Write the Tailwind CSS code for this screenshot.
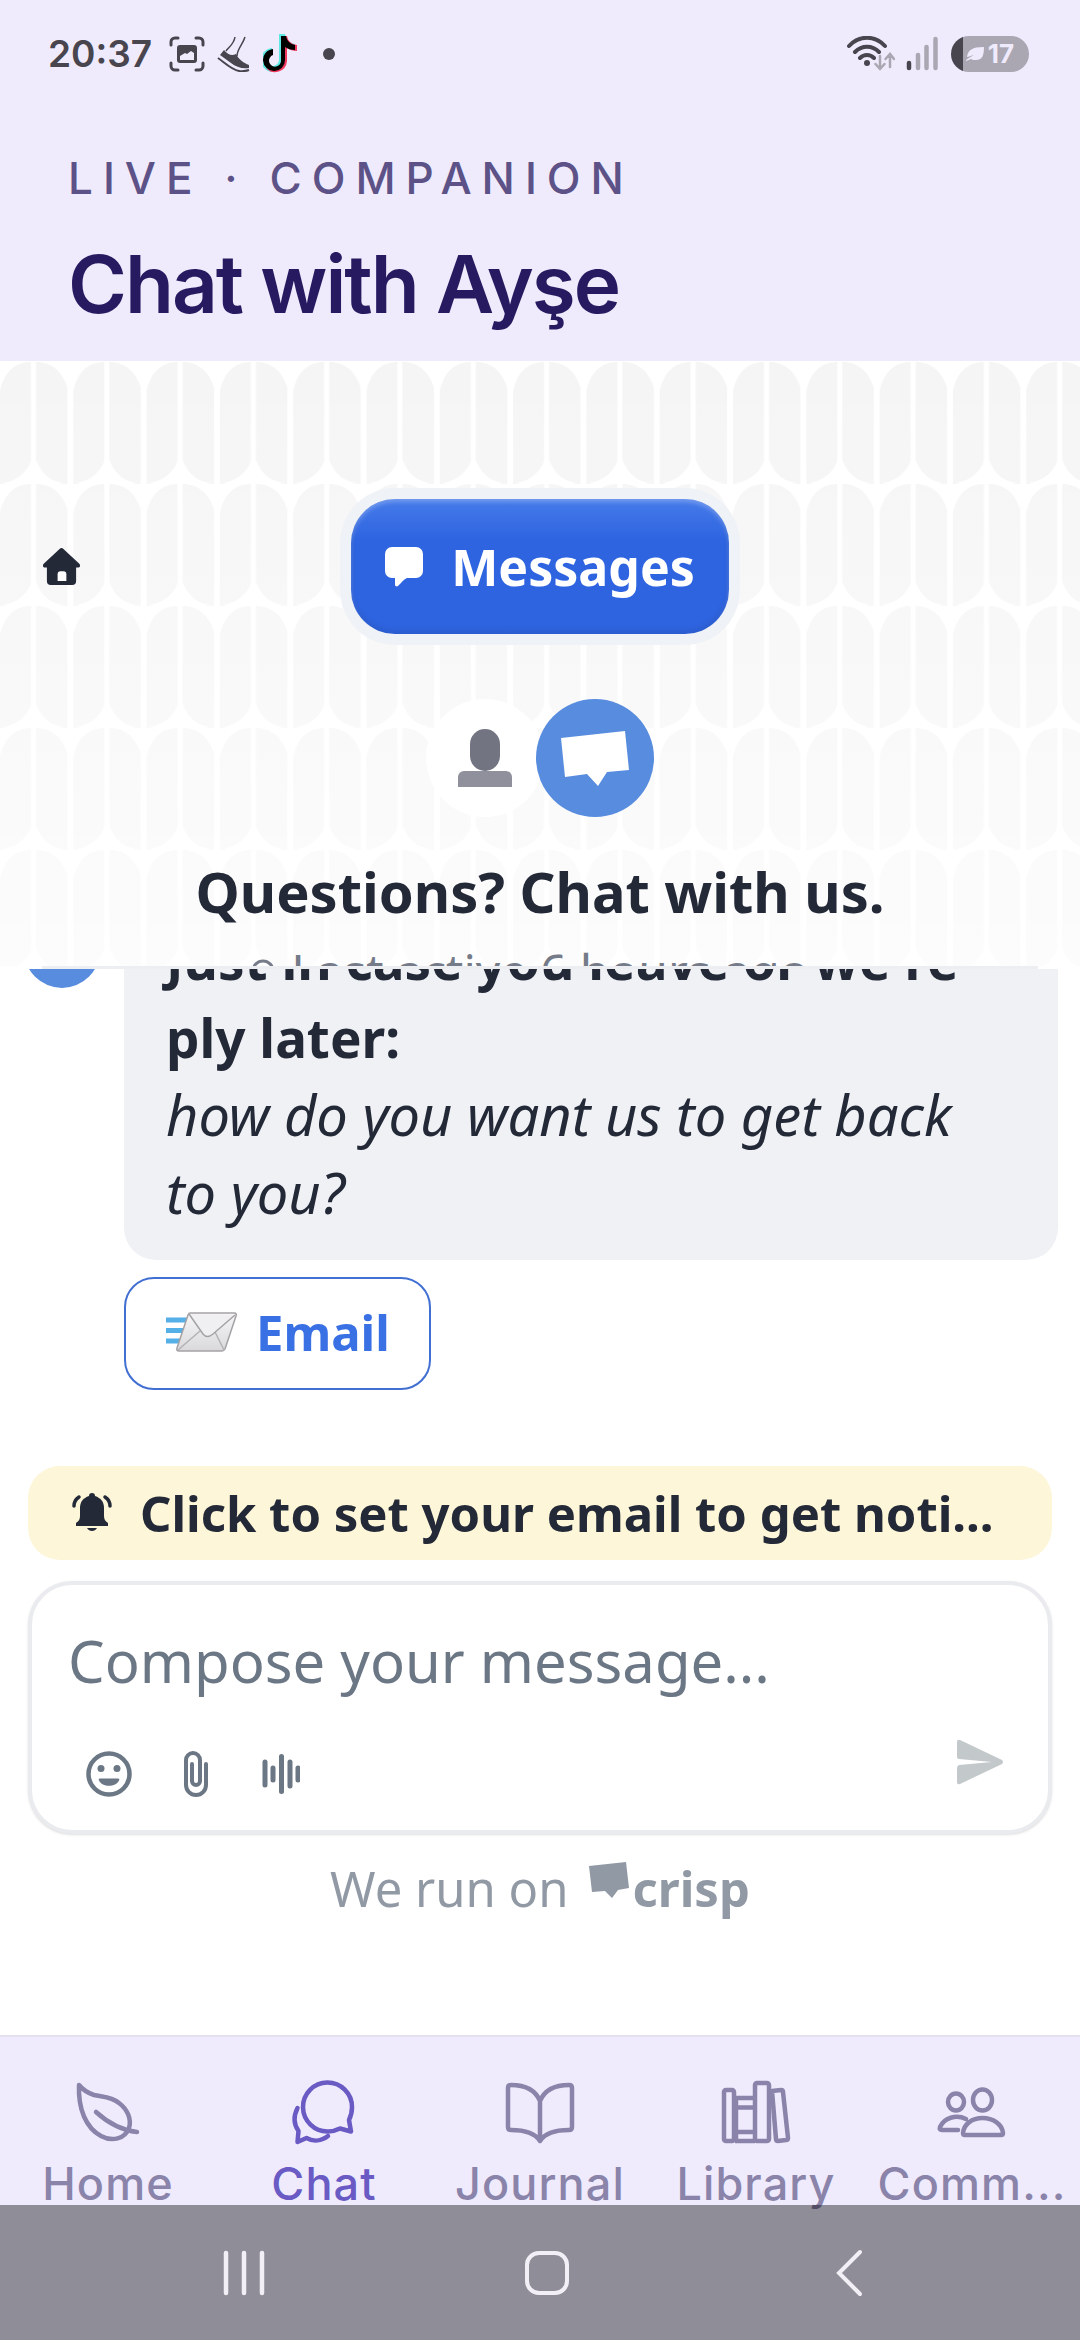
<!DOCTYPE html>
<html lang="en">

<head>
    <meta charset="utf-8">
    <meta name="viewport" content="width=device-width, initial-scale=1">
    <title>Chat with Ayşe</title>
    <script src="https://cdn.jsdelivr.net/npm/@tailwindcss/browser@4"></script>
</head>

<body class="bg-white font-['Noto_Sans',sans-serif] text-[#232937]">
    <div class="flex flex-col h-screen overflow-hidden">

        <!-- Status bar -->
        <div class="flex items-center justify-between h-[108px] shrink-0 pl-12 pr-[51px] bg-[#efebfc] text-[#48454f] font-['Inter',sans-serif]">
            <div class="flex items-center">
                <span class="w-[121px] text-[37px] leading-12 font-semibold">20:37</span>
                <svg class="w-9 h-9" viewBox="0 0 36 36" fill="none" stroke="currentColor" stroke-width="3" stroke-linecap="round">
                    <path d="M2 9V6a4 4 0 0 1 4-4h3M27 2h3a4 4 0 0 1 4 4v3M34 27v3a4 4 0 0 1-4 4h-3M9 34H6a4 4 0 0 1-4-4v-3" />
                    <path fill="currentColor" stroke="none" fill-rule="evenodd" d="M11 9h14a3 3 0 0 1 3 3v12a3 3 0 0 1-3 3H11a3 3 0 0 1-3-3V12a3 3 0 0 1 3-3zM11 20v4h14v-7l-3-2-4 3-2-1z" />
                </svg>
                <svg class="w-9 h-9 ml-3" viewBox="0 0 36 36" fill="none" stroke="currentColor">
                    <path stroke-width="1.5" d="M18 1c-1 7-6 10-9 14M28 1c-2 7-8 12-8 19" />
                    <path fill="currentColor" stroke="none" d="M7 14c4 5 8 6 12 4 3 6 8 9 13 11v3c-7 1-13-1-18-5L3 19z" />
                    <path stroke-width="2" d="M1 22c7 5 14 12 21 13 4 .5 7 0 10-1" />
                </svg>
                <svg class="w-9 h-10 ml-2.5" viewBox="0 0 36 40">
                    <path fill="#5ee8e4" d="M16 0h6c1 5 4 9 10 10v5c-4 0-7-1-10-3v14a12 12 0 1 1-13-12v6a6 6 0 1 0 7 6z" />
                    <path fill="#f0395d" d="M19 2h5c1 5 4 8 10 9v6c-4 0-7-1-10-3v13a12 12 0 0 1-21 7c5 2 16 1 16-9z" />
                    <path fill="#000" d="M18 2h5c1 5 4 8 9 9v5c-4 0-7-1-10-3v13a11 11 0 1 1-12-11v6a6 6 0 1 0 8 5z" />
                </svg>
                <span class="size-3 rounded-full bg-[#48454f] ml-6"></span>
            </div>
            <div class="flex items-center">
                <svg class="w-12 h-9" viewBox="0 0 48 36" fill="none" stroke="currentColor" stroke-width="4" stroke-linecap="round">
                    <path d="M2 10c10-11 26-11 36 0M8 16c7-7 17-7 24 0M13 22c4-4 10-4 14 0" />
                    <circle cx="20" cy="27" r="3" fill="currentColor" stroke="none" />
                    <path stroke="#aaa7b3" stroke-width="2.5" d="M33 20v12m-4.5-4 4.5 5 4.5-5M43 31V19m-4.5 4 4.5-5 4 5" />
                </svg>
                <svg class="w-8 h-9 ml-[11px]" viewBox="0 0 32 36" fill="none" stroke="#aaa7b3" stroke-width="4.5" stroke-linecap="round">
                    <path stroke="#48454f" d="M3 27v5" />
                    <path d="M12 19v13M20.5 11v21M29.5 3v29" />
                </svg>
                <div class="flex items-center justify-center w-[78px] h-9 ml-[13px] rounded-full bg-linear-to-r from-[#48454f] from-16% to-[#aaa7b3] to-16% text-[#efebfc]">
                    <svg class="w-[18px] h-4" viewBox="0 0 18 16">
                        <path fill="currentColor" d="M18 1c0 9-2 13-8 13-2 0-4 0-5-1l-5 2c0-2 3-3 8-6-4 1-6 2-7 2C2 4 6 1 18 1z" />
                    </svg>
                    <span class="ml-1 text-[26px] leading-8 font-bold">17</span>
                </div>
            </div>
        </div>

        <!-- Page header -->
        <header class="shrink-0 h-[253px] pt-[42px] pl-[68px] bg-[#efebfc] font-['Inter',sans-serif]">
            <p class="text-[44px] leading-14 font-medium tracking-[10px] text-[#5c5287]">LIVE · COMPANION</p>
            <h1 class="mt-[30px] text-[80px] leading-24 font-semibold tracking-tight text-[#281a60]">Chat with Ayşe</h1>
        </header>

        <main class="flex flex-col flex-1 min-h-0">

            <!-- Widget header -->
            <section class="relative shrink-0 h-[605px] pt-[138px] overflow-hidden">
                <svg class="absolute inset-0 size-full" aria-hidden="true">
                    <defs>
                        <pattern id="leaves" width="73.3" height="122" patternUnits="userSpaceOnUse">
                            <path fill="#f5f5f6" d="M0 30C4 12 14 1 31 1v99C27 112 14 122 0 122zM36 1c16 0 27 10 31.5 26v95C52 122 42 114 36 99z" />
                        </pattern>
                        <linearGradient id="fade" x2="0" y2="1">
                            <stop stop-color="#fff" stop-opacity="0" />
                            <stop offset="1" stop-color="#fff" stop-opacity=".7" />
                        </linearGradient>
                    </defs>
                    <rect width="100%" height="100%" fill="url(#leaves)" />
                    <rect width="100%" height="100%" fill="url(#fade)" />
                </svg>

                <div class="relative flex flex-col items-center">
                    <div class="grid grid-cols-[1fr_auto_1fr] items-center w-full">
                        <button type="button" aria-label="Home" class="justify-self-start ml-[43px] cursor-pointer">
                            <svg class="size-[37px] block" viewBox="0 0 38 38">
                                <path fill="#232937" d="M17 1a3 3 0 0 1 4 0l16 15c2 2 1 4-1 4h-2v14a4 4 0 0 1-4 4H8a4 4 0 0 1-4-4V20H2c-2 0-3-2-1-4z" />
                                <path fill="#fff" d="M15 34v-7a3 3 0 0 1 3-3h3a3 3 0 0 1 3 3v7z" />
                            </svg>
                        </button>
                        <button type="button" class="flex items-center h-[135px] px-[34px] rounded-[44px] bg-linear-to-b from-[#467bea] to-[#2e64e0] to-30% text-white shadow-[0_0_0_11px_#eff2f6,inset_0_3px_4px_#ffffff40,inset_0_-3px_6px_#00000018] cursor-pointer">
                            <svg class="w-[38px] h-10" viewBox="0 0 38 40">
                                <path fill="currentColor" d="M7 0h24a7 7 0 0 1 7 7v17a7 7 0 0 1-7 7H22c-3 1-6 5-9 8-1 1-3 0-3-1v-7H7a7 7 0 0 1-7-7V7a7 7 0 0 1 7-7z" />
                            </svg>
                            <span class="ml-7 text-[50px] leading-16 font-bold">Messages</span>
                        </button>
                    </div>

                    <div class="flex mt-[65px]">
                        <div class="flex items-center justify-center size-[118px] rounded-full bg-white">
                            <svg class="w-[54px] h-[58px]" viewBox="0 0 54 58">
                                <path fill="#8f909c" d="M0 58V48a6 6 0 0 1 6-6h42a6 6 0 0 1 6 6v10z" />
                                <rect x="12" width="30" height="42" rx="15" fill="#727482" />
                            </svg>
                        </div>
                        <div class="flex items-center justify-center size-[118px] -ml-2 rounded-full bg-[#588cdf]">
                            <svg class="w-[68px] h-[55px]" viewBox="0 0 68 55">
                                <path fill="#fff" d="M0 7 64 0l4 39-22 2-9 14-11-12-22 3z" />
                            </svg>
                        </div>
                    </div>

                    <h2 class="mt-9 text-[56px] leading-[76px] font-bold">Questions? Chat with us.</h2>
                    <p class="flex items-center gap-4 mt-3 pr-5 text-[48px] leading-15 text-[#757b88]">
                        <svg class="size-6" viewBox="0 0 24 24" fill="none" stroke="currentColor" stroke-width="3">
                            <circle cx="12" cy="12" r="10" />
                        </svg>
                        Last active 6 hours ago
                    </p>
                </div>
            </section>
            <div class="shrink-0 h-[3px] mx-[42px] bg-[#eceef1]"></div>

            <!-- Conversation, kept scrolled to the last message -->
            <section class="flex flex-col flex-1 justify-end min-h-0 overflow-hidden pb-[76px]">
                <div class="flex shrink-0">
                    <div class="size-[76px] ml-6 mb-[272px] self-end rounded-full bg-[#588cdf] shrink-0"></div>
                    <p class="flex-1 ml-6 mr-[22px] px-[42px] py-[27px] rounded-[32px] bg-[#eff1f5] text-[53px] leading-[78px]">
                        <strong>Just in case you leave or we re<br>ply later:</strong><br>
                        <em class="text-[56px] leading-16">how do you want us to get back<br>to you?</em>
                    </p>
                </div>
                <button type="button" class="flex items-center shrink-0 self-start h-[113px] ml-31 mt-[17px] pl-10 pr-[39px] pb-1 rounded-[30px] border-2 border-[#416fd2] text-[#3970e4] cursor-pointer">
                    <svg class="w-[72px] h-10" viewBox="0 0 72 40">
                        <defs>
                            <linearGradient id="paper" x2="0" y2="1">
                                <stop stop-color="#f7f7f8" />
                                <stop offset="1" stop-color="#d9d9dc" />
                            </linearGradient>
                        </defs>
                        <path stroke="#55b0e8" stroke-width="5" d="M0 8h24M0 18.5h20M0 29h16" />
                        <path fill="url(#paper)" stroke="#a5a2a5" stroke-width="1.5" stroke-linejoin="round" d="M24 1h45q2 1 1 3L59 37q-1 2-3 2H13q-3 0-2-3L22 3q1-2 2-2z" />
                        <path fill="none" stroke="#b5b2b5" stroke-width="1.5" d="M12 38 34 19M58 38 49 20" />
                        <path fill="#f0f0f2" stroke="#a5a2a5" stroke-width="1.5" d="m23 2 14 20q4 5 10 0L69 3" />
                    </svg>
                    <span class="ml-[18px] text-[49px] leading-16 font-bold">Email</span>
                </button>
            </section>

            <!-- Notice -->
            <button type="button" class="flex items-center shrink-0 h-[94px] mx-7 pl-11 pr-10 rounded-[32px] bg-[#fdf6d8] cursor-pointer">
                <svg class="w-10 h-10 shrink-0" viewBox="0 0 40 40">
                    <path fill="#232937" d="M17 3a3 3 0 0 1 6 0c6 2 9 6 9 12v8c0 3 1 5 4 7v3H4v-3c3-2 4-4 4-7v-8c0-6 3-10 9-12zM15 35h10c-2 4-8 4-10 0z" />
                    <path fill="none" stroke="#232937" stroke-width="3.5" stroke-linecap="round" d="M7 4C4 6 2 9 2 13M33 4c3 2 5 5 5 9" />
                </svg>
                <span class="ml-7 text-[49px] leading-16 font-bold truncate">Click to set your email to get noti...</span>
            </button>

            <!-- Composer -->
            <form class="shrink-0 mt-[21px] mx-7 px-9 pt-[38px] pb-[25px] rounded-[44px] border-4 border-[#e9ebee] bg-white shadow-sm">
                <textarea rows="1" aria-label="Message" placeholder="Compose your message..."
                    class="block w-full h-[76px] text-[58px] leading-[76px] resize-none outline-none overflow-hidden placeholder:text-[#6c7785]"></textarea>
                <div class="flex justify-between mt-10 text-[#6c7785]">
                    <div class="flex items-end gap-[52px] pl-[18px] pb-2">
                        <button type="button" aria-label="Emoji" class="cursor-pointer">
                            <svg class="size-[46px] block" viewBox="0 0 46 46" fill="currentColor">
                                <circle cx="23" cy="23" r="20.5" fill="none" stroke="currentColor" stroke-width="4.5" />
                                <circle cx="15" cy="17.5" r="3.5" />
                                <circle cx="31" cy="17.5" r="3.5" />
                                <path d="M14 27.5h18q2 0 1 2c-3 7-17 7-20 0q-1-2 1-2z" />
                            </svg>
                        </button>
                        <button type="button" aria-label="Attach a file" class="cursor-pointer">
                            <svg class="w-6 h-[46px] block" viewBox="0 0 24 46" fill="none" stroke="currentColor" stroke-width="4" stroke-linecap="round">
                                <path d="M22 13v21a10 10 0 0 1-20 0V9a7 7 0 0 1 14 0v21a4 4 0 0 1-8 0V13" />
                            </svg>
                        </button>
                        <button type="button" aria-label="Record audio" class="cursor-pointer">
                            <svg class="w-10 h-[46px] block" viewBox="0 0 40 46" stroke="currentColor" stroke-width="5" stroke-linecap="round">
                                <path d="M5 11v23M13 17v12M21.5 5.5v35M30 11v24M38 17v12" />
                            </svg>
                        </button>
                    </div>
                    <button type="submit" aria-label="Send" class="mr-2 mb-5 cursor-pointer">
                        <svg class="w-12 h-[46px] block" viewBox="0 0 48 46" fill="#c3c8cb">
                            <path d="M1 3q0-3 3-2l42 20q2 2 0 4L4 45q-3 1-3-2V29q0-2 2-3l33-3L3 20q-2 0-2-2z" />
                        </svg>
                    </button>
                </div>
            </form>

            <a href="#" class="flex items-center justify-center shrink-0 h-16 mt-[22px] mb-[115px] text-[49px] leading-16 text-[#9199a5]">
                We run on
                <svg class="w-10 h-9 ml-5 mb-4" viewBox="0 0 40 36" fill="currentColor">
                    <path d="m0 4 37-4 3 26-11 2-6 8-7-7-13 1z" />
                </svg>
                <strong class="ml-1">crisp</strong>
            </a>
        </main>

        <!-- Tab bar, runs on behind the system buttons -->
        <nav class="grid grid-cols-5 shrink-0 h-[305px] pt-[39px] border-t-2 border-[#e4e0f0] bg-[#efebfc] text-[45px] leading-14 font-medium tracking-wide text-[#8a83aa] font-['Inter',sans-serif]">
            <a href="#" class="flex flex-col items-center gap-2 min-w-0">
                <svg class="size-18" viewBox="0 0 72 72" fill="none" stroke="currentColor" stroke-width="4.5" stroke-linecap="round" stroke-linejoin="round">
                    <path d="M7 9c4 5 9 8 15 10 8 2 17 1 25 8 8 6 13 16 10 25-4 11-17 14-28 8C14 52 6 33 7 9z" />
                    <path d="M24 36c11 10 24 18 41 20" />
                </svg>
                Home
            </a>
            <a href="#" class="flex flex-col items-center gap-2 min-w-0 text-[#6a5ac4]">
                <svg class="size-18" viewBox="0 0 72 72" fill="none" stroke="currentColor" stroke-width="4.5" stroke-linecap="round" stroke-linejoin="round">
                    <path d="M61 44c2-4 3-8 3-13A24.5 24.5 0 1 0 40 55.5c4 0 8-1 12-3l11 3z" />
                    <path d="M9.5 32c-4 8-4 16 1 23l-1 11 9-4c7 4 15 3 21.5-2" />
                </svg>
                Chat
            </a>
            <a href="#" class="flex flex-col items-center gap-2 min-w-0">
                <svg class="size-18" viewBox="0 0 72 72" fill="none" stroke="currentColor" stroke-width="4.5" stroke-linecap="round" stroke-linejoin="round">
                    <path d="M36 25C31 13 21 9 7 9q-3 0-3 3v39q0 3 3 3c14 0 24 3 29 11 5-8 15-11 29-11q3 0 3-3V12q0-3-3-3C51 9 41 13 36 25zv40" />
                </svg>
                Journal
            </a>
            <a href="#" class="flex flex-col items-center gap-2 min-w-0">
                <svg class="size-18" viewBox="0 0 72 72" fill="none" stroke="currentColor" stroke-width="4.5" stroke-linejoin="round">
                    <rect x="4" y="14" width="10" height="51" rx="2" />
                    <path d="M15 22h20M15 31.5h20M15 56h20M15 65h20M16 22v43" />
                    <rect x="35" y="7" width="14" height="58" rx="2" />
                    <path d="m52 15 9-1q2 0 2 2l5 46q0 2-2 2l-8 1q-2 0-2-2z" />
                </svg>
                Library
            </a>
            <a href="#" class="flex flex-col items-center gap-2 min-w-0">
                <svg class="size-18" viewBox="0 0 72 72" fill="none" stroke="currentColor" stroke-width="4.5" stroke-linecap="round" stroke-linejoin="round">
                    <ellipse cx="20" cy="26" rx="8" ry="8.5" />
                    <ellipse cx="46.5" cy="24" rx="9.5" ry="10.5" />
                    <path d="M27 57c1-9 9-15 19.5-15S66 48 67 57q0 2-2 2H29q-2 0-2-2zM30 43c-10-5-22-1-26 8q-1 3 2 3h16" />
                </svg>
                Comm...
            </a>
        </nav>
    </div>

    <!-- System buttons -->
    <div class="fixed bottom-0 inset-x-0 h-[135px] bg-black/40">
        <div class="flex items-center justify-between h-full pl-[220px] pr-[207px]">
            <button type="button" aria-label="Recent apps" class="cursor-pointer">
                <svg class="size-12 block" viewBox="0 0 48 48" stroke="#f2f0f6" stroke-width="4.5" stroke-linecap="round">
                    <path d="M6 4v40M24 4v40M42 4v40" />
                </svg>
            </button>
            <button type="button" aria-label="Home screen" class="cursor-pointer">
                <svg class="size-12 block" viewBox="0 0 48 48" fill="none" stroke="#f2f0f6" stroke-width="4">
                    <rect x="4" y="4" width="40" height="40" rx="12" />
                </svg>
            </button>
            <button type="button" aria-label="Back" class="cursor-pointer">
                <svg class="size-12 block" viewBox="0 0 48 48" fill="none" stroke="#f2f0f6" stroke-width="4" stroke-linecap="round">
                    <path d="M35 3 14 24l21 21" />
                </svg>
            </button>
        </div>
    </div>
</body>

</html>
